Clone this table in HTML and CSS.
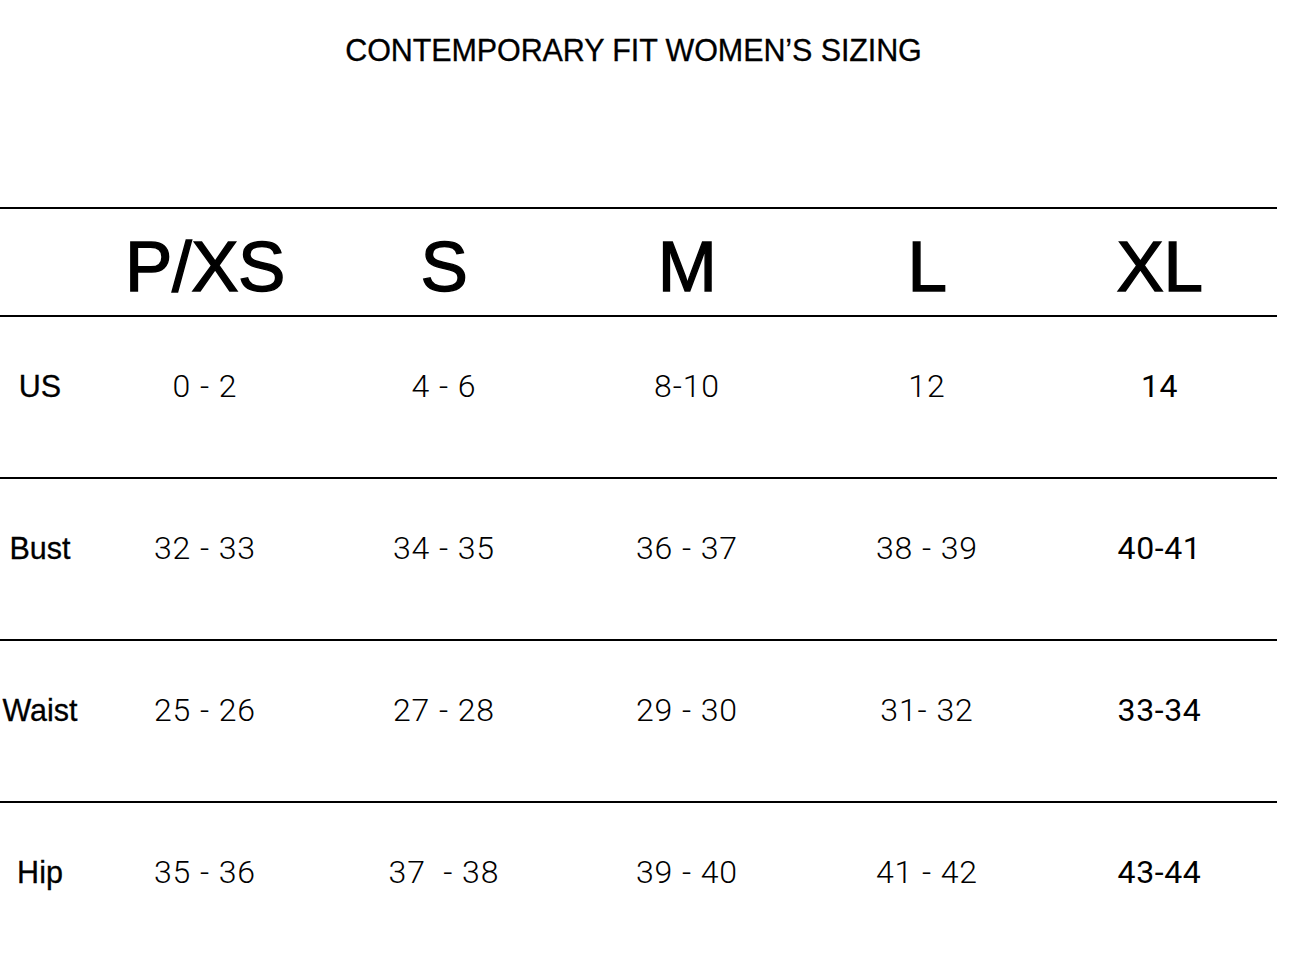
FILE: index.html
```html
<!DOCTYPE html>
<html lang="en">
<head>
<meta charset="utf-8">
<title>Contemporary Fit Women's Sizing</title>
<link rel="stylesheet" href="styles.css">
</head>
<body>
<main class="chart">
  <h1 class="chart-title">CONTEMPORARY FIT WOMEN’S SIZING</h1>
  <table class="size-table">
    <colgroup>
      <col class="col-label">
      <col class="col-1">
      <col class="col-2">
      <col class="col-3">
      <col class="col-4">
      <col class="col-5">
    </colgroup>
    <thead>
      <tr class="head-row">
        <th></th>
        <th>P/XS</th>
        <th>S</th>
        <th>M</th>
        <th>L</th>
        <th class="last">XL</th>
      </tr>
    </thead>
    <tbody>
      <tr class="data-row">
        <th class="label">US</th>
        <td>0 - 2</td>
        <td>4 - 6</td>
        <td>8-10</td>
        <td>12</td>
        <td class="last xl">14</td>
      </tr>
      <tr class="data-row">
        <th class="label">Bust</th>
        <td>32 - 33</td>
        <td>34 - 35</td>
        <td>36 - 37</td>
        <td>38 - 39</td>
        <td class="last xl">40-41</td>
      </tr>
      <tr class="data-row">
        <th class="label">Waist</th>
        <td>25 - 26</td>
        <td>27 - 28</td>
        <td>29 - 30</td>
        <td>31- 32</td>
        <td class="last xl">33-34</td>
      </tr>
      <tr class="data-row final">
        <th class="label">Hip</th>
        <td>35 - 36</td>
        <td>37&nbsp; - 38</td>
        <td>39 - 40</td>
        <td>41 - 42</td>
        <td class="last xl">43-44</td>
      </tr>
    </tbody>
  </table>
</main>
</body>
</html>
```
FILE: styles.css
```css
html, body {
  margin: 0;
  padding: 0;
  background: #ffffff;
  color: #000000;
}

body {
  font-family: "Liberation Sans", Arial, sans-serif;
  overflow: hidden;
}

.chart {
  width: 1277px;
}

.chart-title {
  margin: 0 0 142px 0;
  padding: 35px 10px 0 0;
  font-size: 30.5px;
  line-height: 30px;
  font-weight: normal;
  text-align: center;
  letter-spacing: -0.1px;
  -webkit-text-stroke: 0.3px #000;
}

.size-table {
  width: 1277px;
  table-layout: fixed;
  border-collapse: separate;
  border-spacing: 0;
  border-top: 2px solid #000;
}

.col-label { width: 80px; }
.col-1 { width: 250px; }
.col-2 { width: 228px; }
.col-3 { width: 258px; }
.col-4 { width: 222px; }
.col-5 { width: 239px; }

.size-table th,
.size-table td {
  padding: 0;
  text-align: center;
  font-weight: normal;
  vertical-align: top;
}

.head-row th {
  font-size: 71px;
  line-height: 97px;
  padding-top: 9px;
  border-bottom: 2px solid #000;
  letter-spacing: -0.5px;
  -webkit-text-stroke: 1.4px #000;
}

.data-row th,
.data-row td {
  line-height: 138px;
  padding-bottom: 22px;
  border-bottom: 2px solid #000;
}

.data-row.final th,
.data-row.final td {
  border-bottom: none;
}

.data-row .label {
  font-size: 30.5px;
  letter-spacing: 0;
  -webkit-text-stroke: 0.3px #000;
}

.data-row td {
  font-family: "Roboto", "Liberation Sans", sans-serif;
  font-weight: 300;
  font-size: 32px;
  letter-spacing: 0.9px;
}

.data-row td.xl {
  font-family: "Roboto", "Liberation Sans", sans-serif;
  font-weight: 400;
  font-size: 32px;
  letter-spacing: 0.6px;
}

.size-table .last {
  padding-left: 4px;
}
```
